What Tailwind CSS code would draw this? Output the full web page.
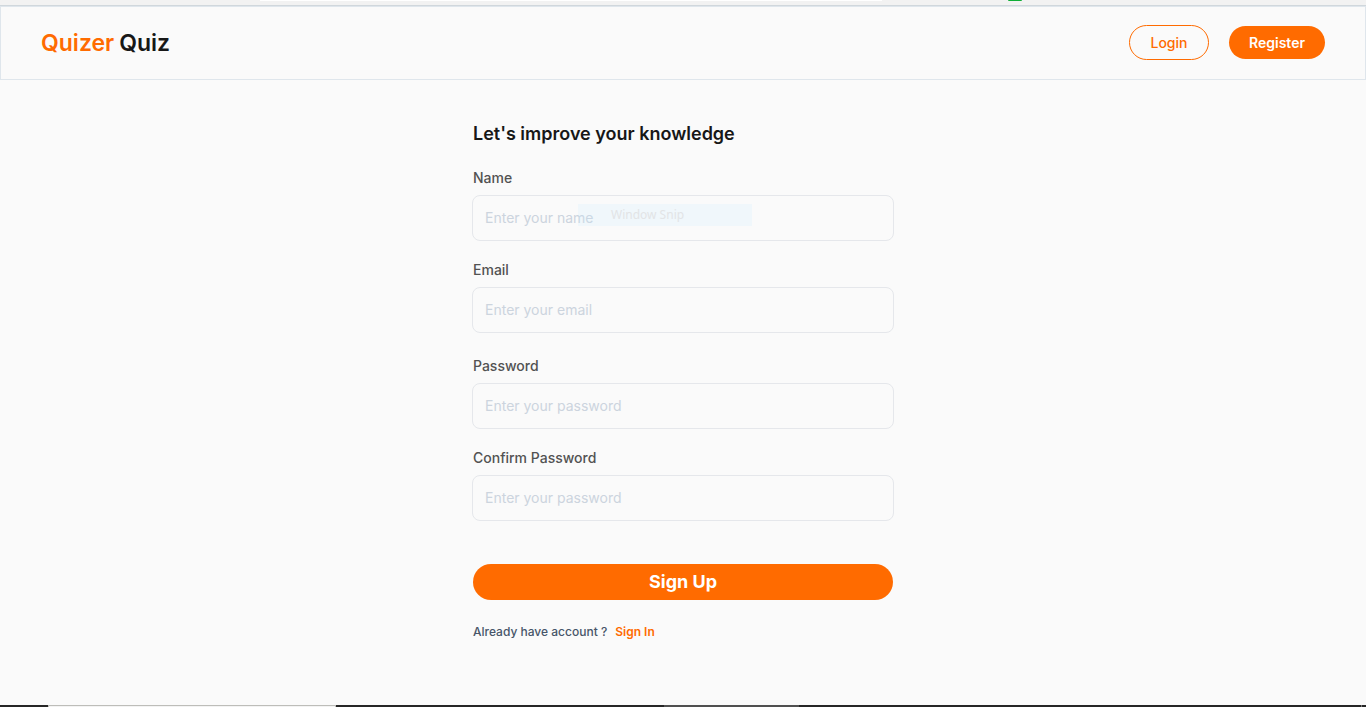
<!DOCTYPE html>
<html lang="en">
<head>
<meta charset="utf-8">
<meta name="viewport" content="width=device-width, initial-scale=1">
<title>Quizer Quiz</title>
<script src="https://cdn.jsdelivr.net/npm/@tailwindcss/browser@4"></script>
</head>
<body class="flex min-h-screen flex-col bg-[#fafafa] font-['Inter',sans-serif] text-[#171717]">
  <!-- Browser toolbar edge -->
  <div class="flex h-[6px] items-start border-b border-[#d0d7dc] bg-[#f2f2f2]">
    <div class="ml-[19%] h-px w-[622px] bg-white"></div>
    <div class="ml-[126px] h-px w-[14px] rounded-b-sm bg-[#0fae37]"></div>
  </div>

  <header class="flex h-[74px] items-center justify-between border border-[#dfe6ec] px-10 pb-px">
    <a href="#" class="flex gap-[5px] text-[23px] leading-8 font-semibold"><span class="text-[#ff6b00]">Quizer</span><span>Quiz</span></a>
    <nav class="flex items-center gap-5">
      <button type="button" class="h-[35px] w-20 rounded-full border border-[#ff6b00] text-sm font-medium text-[#ff6b00]">Login</button>
      <button type="button" class="h-[33px] w-24 rounded-full bg-[#ff6b00] text-sm font-semibold text-white">Register</button>
    </nav>
  </header>

  <main class="mx-auto w-full max-w-[422px] flex-1 pt-10">
    <form>
      <h1 class="px-px text-lg leading-7 font-semibold">Let's improve your knowledge</h1>
      <div class="mt-5">
        <label for="name" class="block px-px text-sm font-medium text-[#525252]">Name</label>
        <div class="relative mt-[7px]">
          <input id="name" type="text" placeholder="Enter your name" class="block h-[46px] w-full rounded-lg border border-gray-200 px-3 pb-0.5 text-sm placeholder:text-[#ccd4de]">
          <div class="absolute top-[9px] left-[106px] flex h-[22px] w-[174px] items-center bg-[#c8ebff]/20 pl-[33px] font-['Noto_Sans',sans-serif] text-xs text-[#e2e4e6]">Window Snip</div>
        </div>
      </div>
      <div class="mt-[19px]">
        <label for="email" class="block px-px text-sm font-medium text-[#525252]">Email</label>
        <input id="email" type="email" placeholder="Enter your email" class="mt-[7px] block h-[46px] w-full rounded-lg border border-gray-200 px-3 pb-0.5 text-sm placeholder:text-[#ccd4de]">
      </div>
      <div class="mt-[23px]">
        <label for="password" class="block px-px text-sm font-medium text-[#525252]">Password</label>
        <input id="password" type="password" placeholder="Enter your password" class="mt-[7px] block h-[46px] w-full rounded-lg border border-gray-200 px-3 pb-0.5 text-sm placeholder:text-[#ccd4de]">
      </div>
      <div class="mt-[19px]">
        <label for="confirm" class="block px-px text-sm font-medium text-[#525252]">Confirm Password</label>
        <input id="confirm" type="password" placeholder="Enter your password" class="mt-[7px] block h-[46px] w-full rounded-lg border border-gray-200 px-3 pb-0.5 text-sm placeholder:text-[#ccd4de]">
      </div>
      <div class="mt-[43px] px-px">
        <button type="submit" class="block h-9 w-full rounded-full bg-[#ff6b00] text-lg font-bold text-white">Sign Up</button>
      </div>
      <p class="mt-6 flex gap-2 px-px text-xs font-medium text-[#475569]">Already have account ? <a href="#" class="font-semibold text-[#ff6b00]">Sign In</a></p>
    </form>
  </main>

  <!-- Taskbar edge -->
  <div class="flex h-[2px] bg-[#262626]">
    <div class="ml-12 h-[2px] w-[288px] border border-b-0 border-[#bdbdb9] bg-[#f3f3f3]"></div>
    <div class="ml-[328px] h-[2px] w-[135px] bg-[#505050]"></div>
    <div class="mr-1 ml-auto h-[2px] w-px bg-[#777777]"></div>
  </div>
</body>
</html>
